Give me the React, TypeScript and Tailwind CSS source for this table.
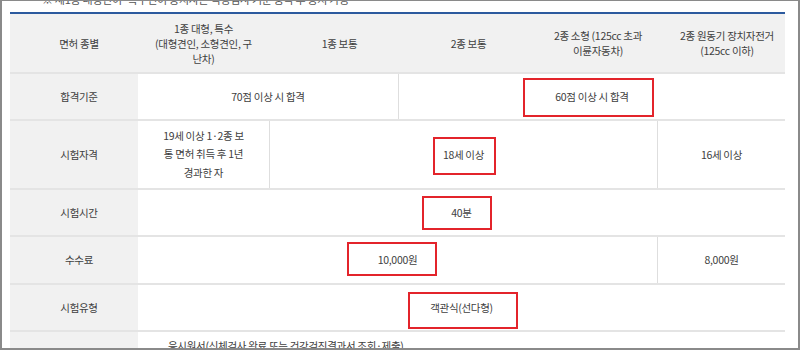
import React from "react";

const font = { fontFamily: '"Noto Sans CJK KR", "Noto Sans", sans-serif' };

function Box({ l, t, w, h }: { l: number; t: number; w: number; h: number }) {
  return (
    <div
      className="absolute border-2 border-[#e3242b]"
      style={{ left: l, top: t, width: w, height: h }}
    />
  );
}

export default function App() {
  const label = "bg-[#f1f1f1] flex items-center justify-center pl-[10px]";
  const cell = "flex items-center justify-center text-center";
  const row = "grid grid-cols-[128px_131px_129px_129px_130px_128px] border-b-2 border-[#e4e4e4]";
  return (
    <div
      className="relative w-[800px] h-[350px] overflow-hidden bg-white border-2 border-t border-[#8a8a8a] text-[10.5px] tracking-[-0.3px] text-[#404040]"
      style={font}
    >
      <div className="h-[11px] overflow-hidden pl-[40px]">
        <div className="mt-[-10px] text-[11px] text-[#555] whitespace-nowrap">
          ※ 제1종 대형면허·특수면허 응시자는 적성검사 기준 충족 후 응시 가능
        </div>
      </div>
      <div className="ml-[8px] w-[775px] border-t-2 border-[#2c5a9e]">
        {/* header */}
        <div className={`${row} h-[60px] bg-[#f1f1f1] leading-[15px]`}>
          <div className={label}>면허 종별</div>
          <div className={`${cell} pl-[10px] px-[10px]`}>
            1종 대형, 특수
            <br />
            (대형견인, 소형견인, 구
            <br />
            난차)
          </div>
          <div className={`${cell} pl-[12px]`}>1종 보통</div>
          <div className={`${cell} pl-[12px]`}>2종 보통</div>
          <div className={`${cell} pl-[12px]`}>
            2종 소형 (125cc 초과
            <br />
            이륜자동차)
          </div>
          <div className={`${cell} pl-[12px]`}>
            2종 원동기 장치자전거
            <br />
            (125cc 이하)
          </div>
        </div>
        {/* 합격기준 */}
        <div className={`${row} h-[47px]`}>
          <div className={label}>합격기준</div>
          <div className={`${cell} col-span-2`}>70점 이상 시 합격</div>
          <div className={`${cell} col-span-3 border-l border-[#dedede]`}>60점 이상 시 합격</div>
        </div>
        {/* 시험자격 */}
        <div className={`${row} h-[69px]`}>
          <div className={label}>시험자격</div>
          <div className={`${cell} leading-[18.5px] whitespace-nowrap`}>
            19세 이상 1·2종 보
            <br />
            통 면허 취득 후 1년
            <br />
            경과한 자
          </div>
          <div className={`${cell} col-span-3 border-l border-[#dedede]`}>18세 이상</div>
          <div className={`${cell} border-l border-[#dedede]`}>16세 이상</div>
        </div>
        {/* 시험시간 */}
        <div className={`${row} h-[47px]`}>
          <div className={label}>시험시간</div>
          <div className={`${cell} col-span-5`}>40분</div>
        </div>
        {/* 수수료 */}
        <div className={`${row} h-[48px]`}>
          <div className={label}>수수료</div>
          <div className={`${cell} col-span-4`}>10,000원</div>
          <div className={`${cell} border-l border-[#dedede]`}>8,000원</div>
        </div>
        {/* 시험유형 */}
        <div className={`${row} h-[47px]`}>
          <div className={label}>시험유형</div>
          <div className={`${cell} col-span-5`}>객관식(선다형)</div>
        </div>
        {/* 준비물 */}
        <div className="grid grid-cols-[128px_647px] h-[40px]">
          <div className="bg-[#f1f1f1]" />
          <div className="pl-[30px] pt-[6px] whitespace-nowrap">
            응시원서(신체검사 완료 또는 건강검진결과서 조회·제출)
          </div>
        </div>
      </div>

      <Box l={521} t={77} w={131} h={39} />
      <Box l={431} t={136} w={63} h={38} />
      <Box l={420} t={195} w={70} h={34} />
      <Box l={345} t={241} w={90} h={34} />
      <Box l={406} t={291} w={110} h={37} />
    </div>
  );
}
